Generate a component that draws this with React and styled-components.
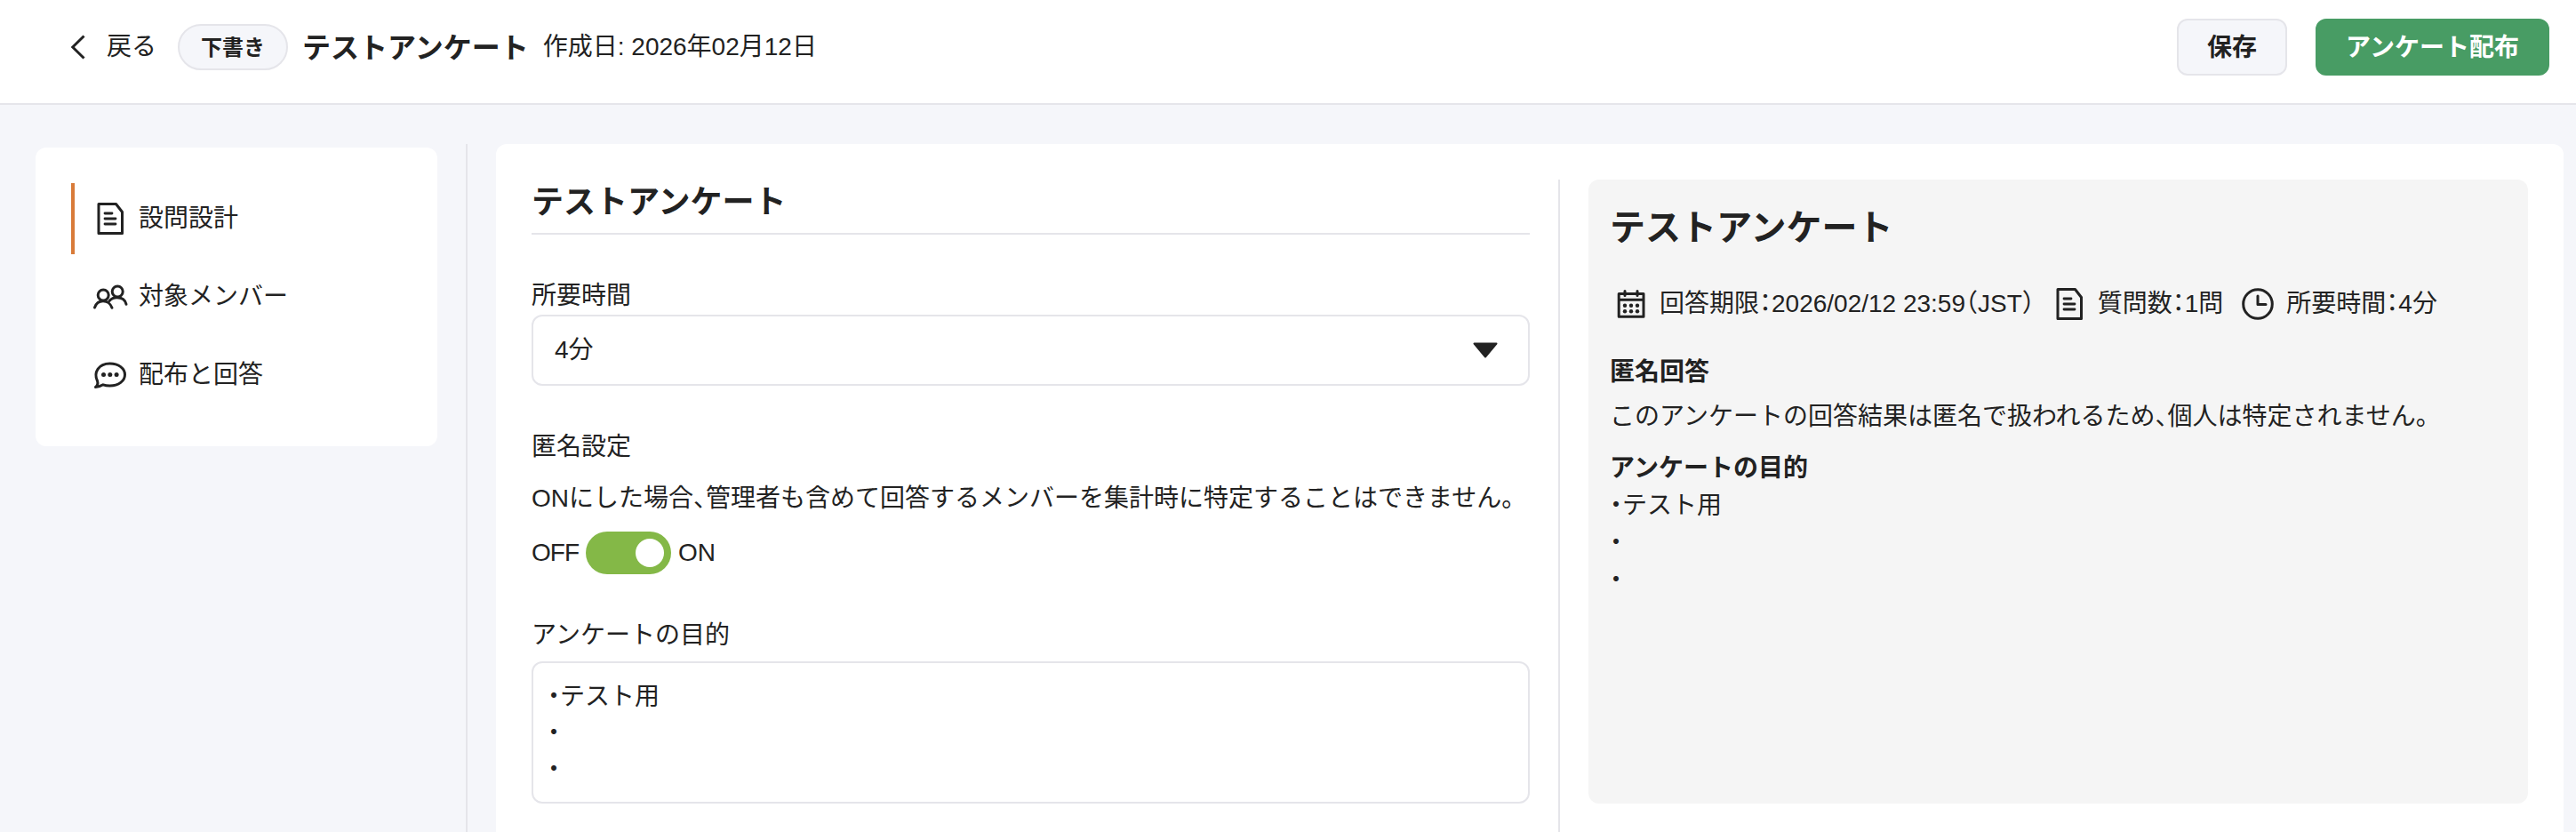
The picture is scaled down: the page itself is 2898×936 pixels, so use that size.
import React from "react";
import styled, { createGlobalStyle } from "styled-components";

const INK = "#222222";
const LINE = "#e5e5ea";
const SURFACE = "#f5f6fa";

const GlobalStyle = createGlobalStyle`
  *, *::before, *::after { box-sizing: border-box; }
  html, body { margin: 0; padding: 0; overflow: hidden; }
  body {
    background: ${SURFACE};
    color: ${INK};
    font-family: "Liberation Sans", "Noto Sans CJK JP", sans-serif;
    font-size: 28px;
    line-height: 42px;
    font-feature-settings: "halt";
  }
  h1, h2, h3, p { margin: 0; }
`;

const Page = styled.div`
  height: 936px;
  display: flex;
  flex-direction: column;
  overflow: hidden;
`;

const Header = styled.header`
  height: 118px;
  flex: none;
  display: flex;
  justify-content: space-between;
  align-items: flex-start;
  padding: 21px 30px 0 78px;
  background: #ffffff;
  border-bottom: 2px solid ${LINE};
`;

const HeaderGroup = styled.div`
  height: 64px;
  display: flex;
  align-items: center;
  gap: ${(p) => p.$gap}px;
`;

const BackLink = styled.a`
  display: flex;
  align-items: center;
  gap: 22px;
  margin-right: 8px;
`;

const StatusPill = styled.span`
  height: 52px;
  padding: 1px 24px 0;
  border: 2px solid ${LINE};
  border-radius: 26px;
  background: ${SURFACE};
  font-size: 24px;
  font-weight: 700;
  line-height: 48px;
`;

const SurveyName = styled.h1`
  padding-top: 2px;
  font-size: 32px;
  font-weight: 700;
  line-height: 48px;
`;

const Button = styled.button`
  height: 64px;
  padding: 1px 32px 0;
  border: 2px solid ${(p) => (p.$primary ? "#489c64" : LINE)};
  border-radius: 12px;
  background: ${(p) => (p.$primary ? "#489c64" : SURFACE)};
  color: ${(p) => (p.$primary ? "#ffffff" : INK)};
  font: inherit;
  font-feature-settings: inherit;
  font-weight: 700;
  line-height: 59px;
`;

const Body = styled.div`
  flex: 1;
  min-height: 0;
  display: flex;
  padding: 44px 14px 0 40px;
`;

const SideNav = styled.nav`
  width: 452px;
  flex: none;
  align-self: flex-start;
  display: flex;
  flex-direction: column;
  gap: 8px;
  margin-top: 4px;
  padding: 40px;
  border-radius: 12px;
  background: #ffffff;
`;

const NavItem = styled.a`
  height: 80px;
  display: flex;
  align-items: center;
  gap: 12px;
  padding-left: 20px;
  border-left: 4px solid ${(p) => (p.$active ? "#d97b39" : "transparent")};
`;

const Separator = styled.div`
  width: 2px;
  flex: none;
  margin: 0 32px;
  background: ${LINE};
`;

const Workspace = styled.main`
  flex: 1;
  min-width: 0;
  display: flex;
  align-items: stretch;
  padding: 40px 40px 0;
  border-radius: 12px 12px 0 0;
  background: #ffffff;
`;

const Editor = styled.section`
  width: 1123px;
  flex: none;
`;

const EditorTitle = styled.h2`
  height: 62px;
  border-bottom: 2px solid ${LINE};
  font-size: 36px;
  font-weight: 700;
  line-height: 51px;
`;

const Field = styled.div`
  margin-top: 48px;
`;

const FieldLabel = styled.div`
  margin-bottom: ${(p) => p.$bottom || 0}px;
`;

const SelectBox = styled.div`
  height: 80px;
  display: flex;
  align-items: center;
  justify-content: space-between;
  padding: 0 34px 0 24px;
  border: 2px solid ${LINE};
  border-radius: 12px;
`;

const SwitchRow = styled.div`
  height: 48px;
  display: flex;
  align-items: center;
  gap: 8px;
`;

const SwitchLabel = styled.span`
  letter-spacing: ${(p) => (p.$tight ? "-1px" : "normal")};
`;

const Switch = styled.span`
  width: 96px;
  height: 48px;
  display: flex;
  align-items: center;
  justify-content: flex-end;
  padding: 0 8px;
  border-radius: 24px;
  background: #84b847;
`;

const Knob = styled.span`
  width: 32px;
  height: 32px;
  border-radius: 50%;
  background: #ffffff;
`;

const TextArea = styled.div`
  height: 160px;
  padding: 17px 16px;
  border: 2px solid ${LINE};
  border-radius: 12px;
  line-height: 41px;
  white-space: pre-line;
`;

const Preview = styled.section`
  flex: 1;
  min-width: 0;
  height: 702px;
  padding: 24px;
  border-radius: 12px;
  background: #f5f5f5;
`;

const PreviewTitle = styled.h2`
  font-size: 40px;
  font-weight: 700;
  line-height: 61px;
`;

const MetaRow = styled.div`
  height: 48px;
  display: flex;
  align-items: center;
  margin: 31px 0 32px 4px;
  gap: 19px;
`;

const Meta = styled.span`
  display: flex;
  align-items: center;
  gap: 12px;
  white-space: nowrap;
`;

const PreviewHeading = styled.h3`
  font-size: 28px;
  font-weight: 700;
  line-height: 42px;
`;

const PreviewText = styled.p`
  margin: ${(p) => p.$margin || "0"};
  white-space: pre-line;
`;

const Icon = styled.svg`
  display: block;
  flex: none;
  fill: none;
  stroke: ${INK};
  stroke-width: 3;
  stroke-linecap: round;
  stroke-linejoin: round;
`;

const DocumentIcon = () => (
  <Icon width="40" height="40" viewBox="0 0 40 40">
    <path d="M7 3.5h19.5L33.500 12.500V36.500H7z" />
    <path d="M14 14h8M14 20h12M14 26h12" strokeWidth="2.8" />
  </Icon>
);

const MembersIcon = () => (
  <Icon width="40" height="40" viewBox="0 0 40 40">
    <circle cx="12.200" cy="18" r="6" />
    <circle cx="28.200" cy="14" r="6" />
    <path d="M2.500 32C4 27.500 7.500 24.800 12 24.800s8.500 3 10 7.500" />
    <path d="M19 24.500c2.200-2.500 5.200-3.800 8.500-3.800 5.500 0 9.500 2.800 10.500 7.600" />
  </Icon>
);

const ChatIcon = () => (
  <Icon width="40" height="40" viewBox="0 0 40 40">
    <path d="M3.500 33.500C6 31.500 6.500 29.500 5.500 26.500 1 17 7 7 19.500 7 29.500 7 36.500 12.500 36.500 19.500S29.500 32 19.500 32c-3 0-5-.3-7.500-1.200-2.500 1.500-5 2.700-8.500 2.700z" />
    <g fill={INK} stroke="none">
      <circle cx="12.500" cy="19.500" r="2.500" />
      <circle cx="19.800" cy="19.500" r="2.500" />
      <circle cx="27.100" cy="19.500" r="2.500" />
    </g>
  </Icon>
);

const CalendarIcon = () => (
  <Icon width="40" height="40" viewBox="0 0 40 40">
    <path d="M6.200 8.500h27.800v25.800H6.200zM6.200 15.200h27.800M13 5.500v5M27 5.500v5" />
    <g fill={INK} stroke="none">
      {[13, 20, 27].map((x) =>
        [21.700, 28.200].map((y) => <circle key={`${x}-${y}`} cx={x} cy={y} r="2.200" />)
      )}
    </g>
  </Icon>
);

const ClockIcon = () => (
  <Icon width="40" height="40" viewBox="0 0 40 40">
    <circle cx="20" cy="20" r="16.300" />
    <path d="M20 11v9.500h9" />
  </Icon>
);

const BackIcon = () => (
  <Icon width="20" height="28" viewBox="0 0 20 28">
    <path d="M16.500 1.500L3.800 14l12.700 12.500" strokeLinecap="butt" strokeLinejoin="miter" />
  </Icon>
);

const CaretIcon = () => (
  <Icon width="28" height="18" viewBox="0 0 28 18">
    <path d="M1.500 1.500h25L14 16.500z" fill={INK} strokeWidth="2" />
  </Icon>
);

const NAV = [
  { label: "設問設計", icon: DocumentIcon, active: true },
  { label: "対象メンバー", icon: MembersIcon },
  { label: "配布と回答", icon: ChatIcon },
];

const META = [
  { label: "回答期限：2026/02/12 23:59（JST）", icon: CalendarIcon },
  { label: "質問数：1問", icon: DocumentIcon },
  { label: "所要時間：4分", icon: ClockIcon },
];

const SURVEY = "テストアンケート";
const PURPOSE = "・テスト用\n・\n・";

export default function App() {
  return (
    <>
      <GlobalStyle />
      <Page lang="ja">
        <Header>
          <HeaderGroup $gap={16}>
            <BackLink>
              <BackIcon />
              戻る
            </BackLink>
            <StatusPill>下書き</StatusPill>
            <SurveyName>{SURVEY}</SurveyName>
            <span>作成日: 2026年02月12日</span>
          </HeaderGroup>
          <HeaderGroup $gap={32}>
            <Button>保存</Button>
            <Button $primary>アンケート配布</Button>
          </HeaderGroup>
        </Header>
        <Body>
          <SideNav>
            {NAV.map(({ label, icon: Glyph, active }) => (
              <NavItem key={label} $active={active}>
                <Glyph />
                {label}
              </NavItem>
            ))}
          </SideNav>
          <Separator />
          <Workspace>
            <Editor>
              <EditorTitle>{SURVEY}</EditorTitle>
              <Field>
                <FieldLabel>所要時間</FieldLabel>
                <SelectBox>
                  4分
                  <CaretIcon />
                </SelectBox>
              </Field>
              <Field>
                <FieldLabel $bottom={16}>匿名設定</FieldLabel>
                <FieldLabel $bottom={16}>
                  ONにした場合、管理者も含めて回答するメンバーを集計時に特定することはできません。
                </FieldLabel>
                <SwitchRow>
                  <SwitchLabel $tight>OFF</SwitchLabel>
                  <Switch>
                    <Knob />
                  </Switch>
                  <SwitchLabel>ON</SwitchLabel>
                </SwitchRow>
              </Field>
              <Field>
                <FieldLabel $bottom={8}>アンケートの目的</FieldLabel>
                <TextArea>{PURPOSE}</TextArea>
              </Field>
            </Editor>
            <Separator />
            <Preview>
              <PreviewTitle>{SURVEY}</PreviewTitle>
              <MetaRow>
                {META.map(({ label, icon: Glyph }) => (
                  <Meta key={label}>
                    <Glyph />
                    {label}
                  </Meta>
                ))}
              </MetaRow>
              <PreviewHeading>匿名回答</PreviewHeading>
              <PreviewText $margin="8px 0 16px">
                このアンケートの回答結果は匿名で扱われるため、個人は特定されません。
              </PreviewText>
              <PreviewHeading>アンケートの目的</PreviewHeading>
              <PreviewText>{PURPOSE}</PreviewText>
            </Preview>
          </Workspace>
        </Body>
      </Page>
    </>
  );
}
